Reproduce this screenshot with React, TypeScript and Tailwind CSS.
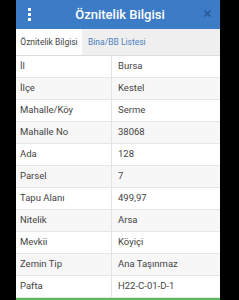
import React from 'react'

const rows: [string, string][] = [
  ['İl', 'Bursa'],
  ['İlçe', 'Kestel'],
  ['Mahalle/Köy', 'Serme'],
  ['Mahalle No', '38068'],
  ['Ada', '128'],
  ['Parsel', '7'],
  ['Tapu Alanı', '499,97'],
  ['Nitelik', 'Arsa'],
  ['Mevkii', 'Köyiçi'],
  ['Zemin Tip', 'Ana Taşınmaz'],
  ['Pafta', 'H22-C-01-D-1'],
]

const App: React.FC = () => {
  return (
    <div className="w-[239px] h-[300px] bg-black overflow-hidden pl-[16px] font-['Roboto',sans-serif]">
      <div className="w-[204px] bg-white">
        {/* Header */}
        <div className="relative h-[29px] bg-[#3c7cc6] flex items-center justify-center">
          <div className="absolute left-[12px] top-[8px] flex flex-col gap-[2px]">
            <span className="block w-[3px] h-[3px] bg-white" />
            <span className="block w-[3px] h-[3px] bg-white" />
            <span className="block w-[3px] h-[3px] bg-white" />
          </div>
          <span className="text-white text-[13px] font-medium leading-none pl-[4px]">Öznitelik Bilgisi</span>
          <svg className="absolute left-[188px] top-[10px]" width="7" height="7" viewBox="0 0 7 7">
            <path d="M0.5 0.5 L6.5 6.5 M6.5 0.5 L0.5 6.5" stroke="#2a5c97" strokeWidth="1.8" />
          </svg>
        </div>

        {/* Tabs */}
        <div className="h-[27px] flex bg-[#efefef] border-b border-[#dddddd]">
          <div className="w-[66px] bg-white flex items-center justify-center whitespace-nowrap text-[8.5px] text-[#444444]">
            Öznitelik Bilgisi
          </div>
          <div className="flex items-center pl-[6px] whitespace-nowrap text-[8.5px] text-[#4a80c0]">Bina/BB Listesi</div>
        </div>

        {/* Table */}
        {rows.map(([label, value], i) => (
          <div
            key={label}
            className={`h-[22px] grid grid-cols-[96px_1fr] border-b border-[#e6e6e6] text-[9.5px] text-[#444444] ${
              i % 2 === 1 ? 'bg-[#f7f7f7]' : 'bg-white'
            }`}
          >
            <div className="flex items-center pl-[4px] border-r border-[#e2e2e2]">{label}</div>
            <div className="flex items-center pl-[6px]">{value}</div>
          </div>
        ))}

        <div className="h-[10px] bg-[#5cb85c]" />
      </div>
    </div>
  )
}

export default App
